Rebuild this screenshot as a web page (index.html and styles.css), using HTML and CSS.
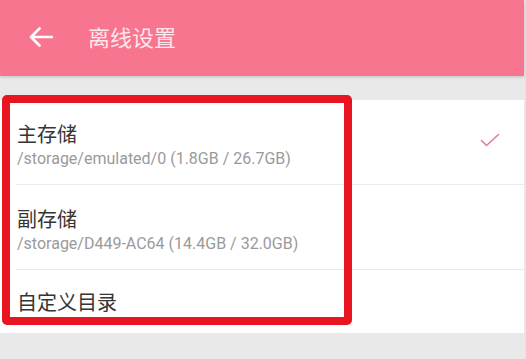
FILE: index.html
```html
<!DOCTYPE html>
<html lang="zh">
<head>
<meta charset="utf-8">
<title>离线设置</title>
<link rel="stylesheet" href="styles.css">
</head>
<body>
<div class="page">
  <header class="appbar">
    <svg class="back" width="24" height="20" viewBox="0 0 24 20">
      <path d="M23 10H2.5M10.5 1.5L2 10l8.5 8.5" fill="none" stroke="#fff" stroke-width="2.6" stroke-linecap="round" stroke-linejoin="round"/>
    </svg>
    <h1 class="title">离线设置</h1>
  </header>
  <main class="content">
    <section class="card">
      <div class="row">
        <div class="texts">
          <div class="name">主存储</div>
          <div class="path">/storage/emulated/0 (1.8GB / 26.7GB)</div>
        </div>
        <svg class="check" width="20" height="14" viewBox="0 0 20 14">
          <path d="M1.5 7.5l5 5L18.5 1.5" fill="none" stroke="#e27b96" stroke-width="1.6" stroke-linecap="round" stroke-linejoin="round"/>
        </svg>
      </div>
      <div class="row">
        <div class="texts">
          <div class="name">副存储</div>
          <div class="path">/storage/D449-AC64 (14.4GB / 32.0GB)</div>
        </div>
      </div>
      <div class="row row-single">
        <div class="texts">
          <div class="name">自定义目录</div>
        </div>
      </div>
    </section>
    <div class="highlight"></div>
  </main>
</div>
</body>
</html>
```

FILE: styles.css
```css
html, body {
  margin: 0;
  padding: 0;
}
body {
  background: #e6e6e6;
  font-family: Roboto, "Noto Sans CJK SC", sans-serif;
  width: 526px;
  height: 359px;
  overflow: hidden;
}
.page {
  width: 524px;
  height: 359px;
  background: #e9e9e9;
  position: relative;
}
.appbar {
  height: 76px;
  background: #f8758f;
  display: flex;
  align-items: center;
  padding-left: 29px;
  box-shadow: 0 1px 3px rgba(0,0,0,0.18);
  position: relative;
  z-index: 1;
}
.back {
  display: block;
  margin-top: -2px;
}
.title {
  margin: -5px 0 0 35px;
  font-family: "Noto Sans CJK SC", sans-serif;
  font-weight: 400;
  font-size: 22px;
  line-height: 28px;
  color: #fde6ec;
}
.content {
  padding-top: 24px;
}
.card {
  background: #fff;
  display: flex;
  flex-direction: column;
}
.row {
  display: flex;
  align-items: center;
  justify-content: space-between;
  padding: 22px 24px 16px 17px;
  height: 46px;
  position: relative;
}
.row + .row::before {
  content: "";
  position: absolute;
  left: 16px;
  right: 0;
  top: -1px;
  height: 1px;
  background: #ebebeb;
}
.row + .row {
  margin-top: 1px;
}
.row-single {
  height: 63px;
  padding-top: 0;
  padding-bottom: 0;
}
.texts {
  display: flex;
  flex-direction: column;
}
.name {
  font-family: "Noto Sans CJK SC", sans-serif;
  font-size: 20px;
  line-height: 24px;
  color: #353535;
}
.path {
  margin-top: 4px;
  font-family: Roboto, sans-serif;
  font-size: 16px;
  line-height: 18px;
  color: #9a9a9a;
}
.check {
  display: block;
  margin-top: -10px;
}
.highlight {
  position: absolute;
  left: 2px;
  top: 95px;
  width: 334px;
  height: 214px;
  border: 8px solid #e8141f;
  border-radius: 5px;
  pointer-events: none;
}
```
